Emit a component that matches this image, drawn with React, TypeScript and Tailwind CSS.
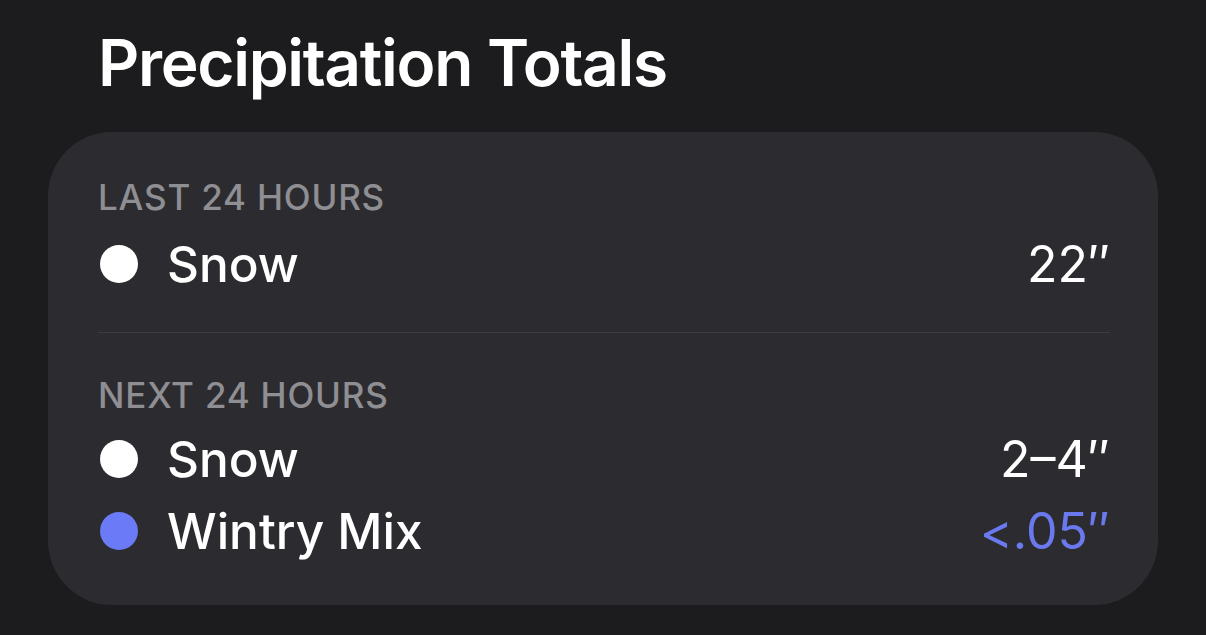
export default function App() {
  const font = { fontFamily: "Inter, 'Noto Sans', sans-serif" };
  return (
    <div className="w-[1206px] h-[635px] bg-[#1c1c1e] overflow-hidden" style={font}>
      <div className="pl-[98px] pt-[26px] h-[132px]">
        <h1 className="text-[64px] leading-[74px] font-semibold text-white tracking-[-1.3px]">Precipitation Totals</h1>
      </div>
      <div className="mx-[48px] w-[1110px] h-[473px] rounded-[64px] bg-[#2c2c30] pl-[50px] pr-[48px] pt-[45px]">
        <div className="text-[35px] leading-[40px] font-medium text-[#8e8e93] tracking-[0.8px]">LAST 24 HOURS</div>
        <div className="mt-[11px]">
          <Row label="Snow" value={"22\u2033"} dot="bg-white" valueColor="text-white" />
        </div>
        <div className="h-[1px] bg-[#3d3d41] mt-[32px] mb-[42px]"></div>
        <div className="text-[35px] leading-[40px] font-medium text-[#8e8e93] tracking-[0.8px]">NEXT 24 HOURS</div>
        <div className="mt-[8px]">
          <Row label="Snow" value={"2\u20134\u2033"} dot="bg-white" valueColor="text-white" />
          <Row label="Wintry Mix" value={"<.05\u2033"} dot="bg-[#6b7af7]" valueColor="text-[#6b79ee]" />
        </div>
      </div>
    </div>
  );
}

function Row({ label, value, dot, valueColor }: { label: string; value: string; dot: string; valueColor: string }) {
  return (
    <div className="flex items-center h-[72px]">
      <div className={`w-[38px] h-[38px] rounded-full ${dot} ml-[2px]`}></div>
      <div className="ml-[29px] text-[49.5px] font-medium text-white flex-1">{label}</div>
      <div className={`text-[50px] font-normal ${valueColor}`}>{value}</div>
    </div>
  );
}
